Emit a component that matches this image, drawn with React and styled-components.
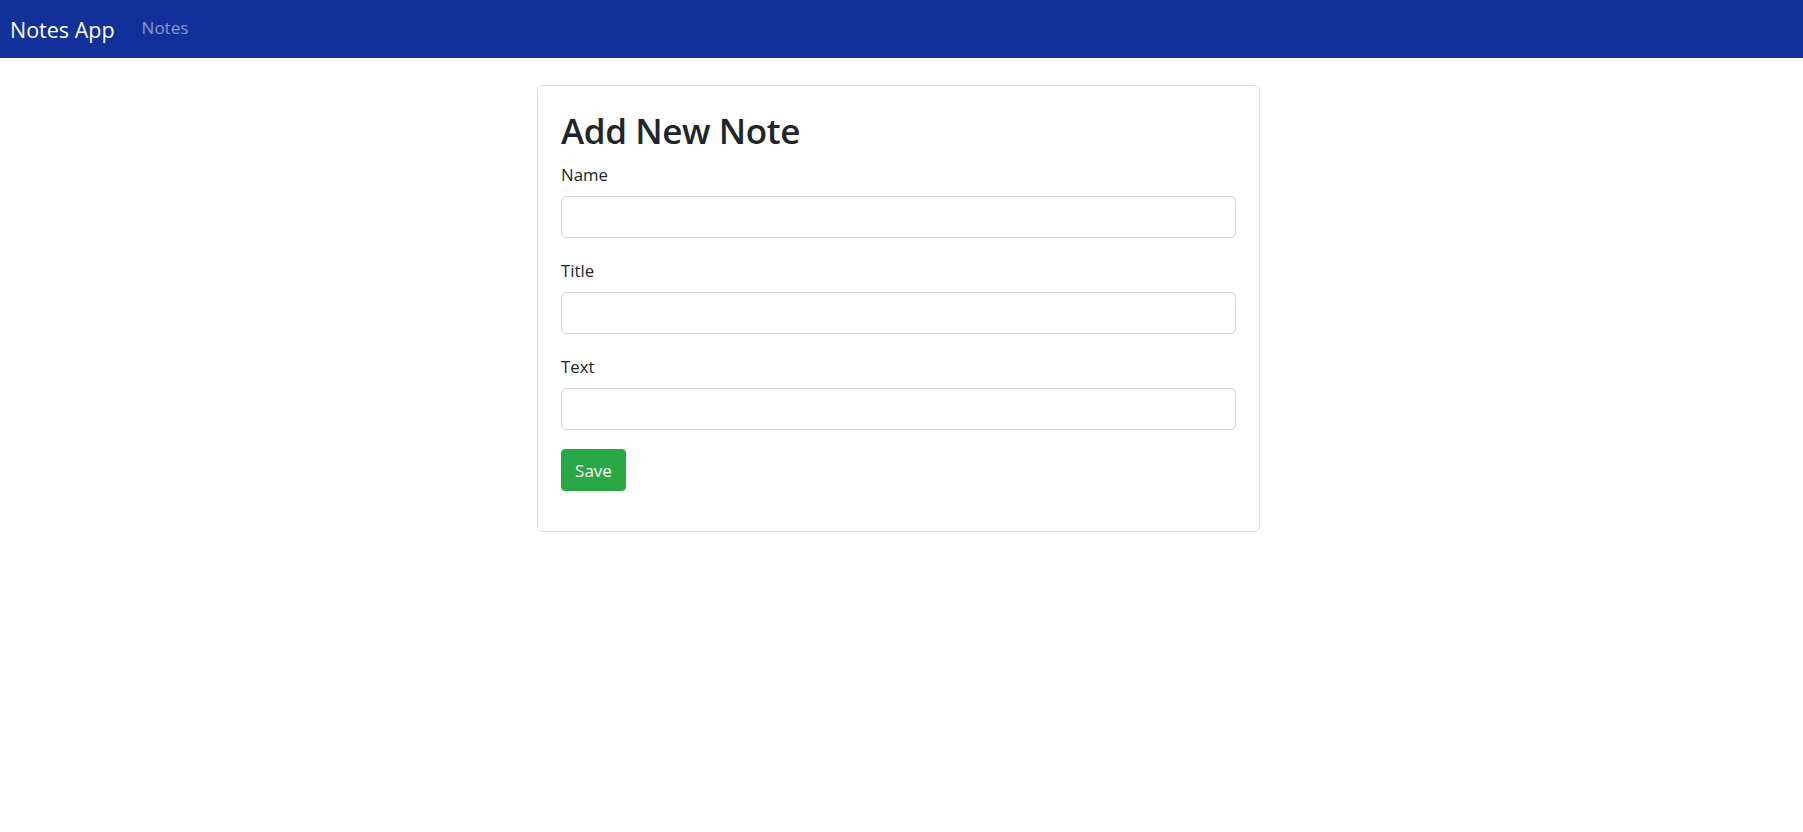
import React from 'react';
import styled, { createGlobalStyle } from 'styled-components';

const GlobalStyle = createGlobalStyle`
    body {
        margin: 0;
        background: #fff;
        color: #212529;
        font-family: "Open Sans", "Noto Sans", sans-serif;
    }
    * {
        box-sizing: border-box;
    }
`

const Navbar = styled.nav`
    display: flex;
    align-items: center;
    height: 58px;
    padding: 0 10px;
    background: #11309a;
`

const Brand = styled.a`
    font-size: 21.5px;
    line-height: 30px;
    color: #fff;
    text-decoration: none;
    margin-right: 27px;
    margin-top: 1px;
`

const NavLink = styled.a`
    font-size: 17px;
    line-height: 26px;
    color: rgba(255, 255, 255, 0.5);
    text-decoration: none;
    margin-top: -2px;
`

const Card = styled.div`
    width: 723px;
    margin: 27px 0 0 calc(50% - 364.5px);
    padding: 22px 23px 40px;
    border: 1px solid #dcdfe2;
    border-radius: 5px;
    background: #fff;
`

const Title = styled.h1`
    margin: 0 0 8px;
    font-size: 35px;
    line-height: 45px;
    font-weight: 600;
    letter-spacing: -0.4px;
    color: #212529;
`

const FormGroup = styled.div`
    display: flex;
    flex-direction: column;
    margin-bottom: ${props => props.last ? '0' : '19px'};
`

const Label = styled.label`
    font-size: 16.8px;
    line-height: 24px;
    padding-top: 2px;
    margin-bottom: 9px;
    color: #212529;
`

const InputText = styled.input`
    height: 42px;
    width: 100%;
    padding: 6px 13px;
    font-size: 17px;
    font-family: inherit;
    color: #495057;
    border: 1px solid #ced4da;
    border-radius: 5px;
    background: #fff;
    outline: none;
`

const Button = styled.button`
    width: 65px;
    height: 42px;
    padding: 0;
    font-size: 17px;
    font-family: inherit;
    color: #fff;
    background: #28a745;
    border: 1px solid #28a745;
    border-radius: 4px;
    cursor: pointer;
`

class App extends React.Component {
    render() {
        return (
            <>
                <GlobalStyle />
                <Navbar>
                    <Brand href="#">Notes App</Brand>
                    <NavLink href="#">Notes</NavLink>
                </Navbar>

                <Card>
                    <Title>Add New Note</Title>

                    <FormGroup>
                        <Label>Name</Label>
                        <InputText type="text" />
                    </FormGroup>

                    <FormGroup>
                        <Label>Title</Label>
                        <InputText type="text" />
                    </FormGroup>

                    <FormGroup>
                        <Label>Text</Label>
                        <InputText type="text" />
                    </FormGroup>

                    <FormGroup last>
                        <div>
                            <Button>Save</Button>
                        </div>
                    </FormGroup>
                </Card>
            </>
        )
    }
}

export default App;
